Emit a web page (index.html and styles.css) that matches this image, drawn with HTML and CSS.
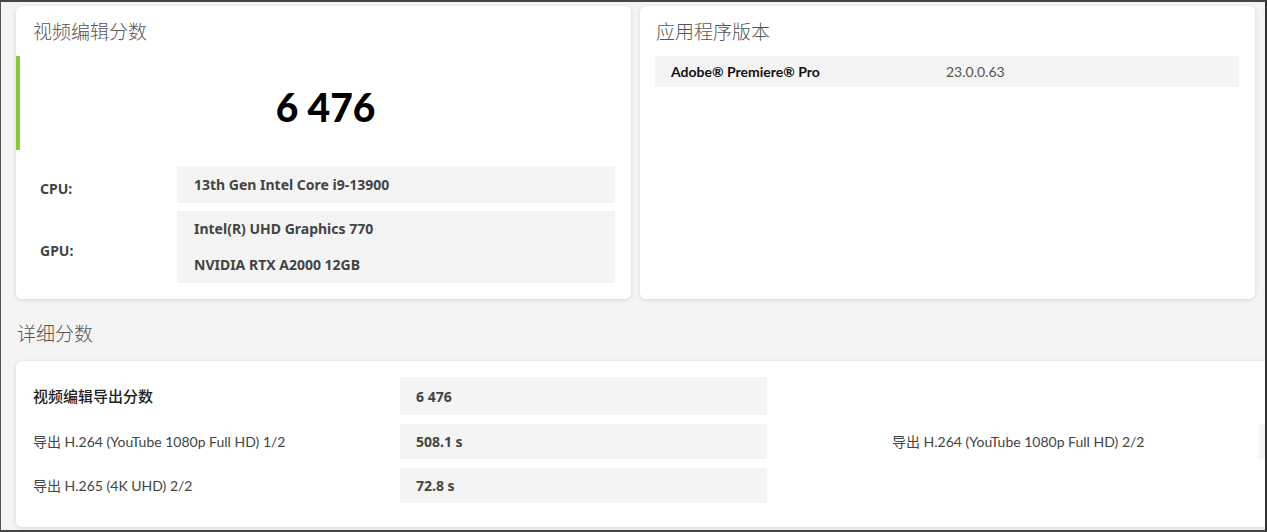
FILE: index.html
```html
<!DOCTYPE html>
<html lang="zh-CN">
<head>
<meta charset="utf-8">
<title>视频编辑分数</title>
<link rel="stylesheet" href="styles.css">
</head>
<body>
<div class="page">
  <div class="top-row">
    <section class="card score-card">
      <h2 class="card-title">视频编辑分数</h2>
      <div class="score-block"><span class="score">6 476</span></div>
      <div class="info">
        <div class="info-row">
          <div class="info-label">CPU:</div>
          <div class="info-value"><div class="info-line">13th Gen Intel Core i9-13900</div></div>
        </div>
        <div class="info-row">
          <div class="info-label">GPU:</div>
          <div class="info-value">
            <div class="info-line">Intel(R) UHD Graphics 770</div>
            <div class="info-line">NVIDIA RTX A2000 12GB</div>
          </div>
        </div>
      </div>
    </section>
    <section class="card app-card">
      <h2 class="card-title">应用程序版本</h2>
      <div class="app-row">
        <span class="app-name">Adobe® Premiere® Pro</span>
        <span class="app-version">23.0.0.63</span>
      </div>
    </section>
  </div>

  <h2 class="section-title">详细分数</h2>
  <section class="card detail-card">
    <div class="detail-grid">
      <div class="d-label d-main r1">视频编辑导出分数</div>
      <div class="d-value d-main r1">6 476</div>
      <div class="d-label r2">导出 H.264 (YouTube 1080p Full HD) 1/2</div>
      <div class="d-value r2">508.1 s</div>
      <div class="d-label r3">导出 H.265 (4K UHD) 2/2</div>
      <div class="d-value r3">72.8 s</div>
      <div class="d-label r2 c2">导出 H.264 (YouTube 1080p Full HD) 2/2</div>
      <div class="d-value r2 c2v"></div>
    </div>
  </section>
</div>
<div class="frame"></div>
</body>
</html>
```

FILE: styles.css
```css
html, body {
  margin: 0;
  padding: 0;
}
body {
  width: 1267px;
  height: 532px;
  overflow: hidden;
  background: #f4f4f4;
  font-family: "Noto Sans", "Noto Sans CJK SC", sans-serif;
  color: #333;
}
.page {
  padding: 6px 0 0 16px;
}
.top-row {
  display: flex;
  gap: 9px;
}
.card {
  background: #fff;
  border-radius: 6px;
  box-shadow: 0 1px 4px rgba(0, 0, 0, 0.13);
}
.score-card, .app-card {
  width: 615px;
  height: 293px;
  box-sizing: border-box;
}
.card-title {
  margin: 0;
  font-family: "Noto Sans CJK SC", sans-serif;
  font-weight: 300;
  font-size: 19px;
  line-height: 26px;
  color: #555;
  padding: 12px 0 12px 17px;
}
.app-card .card-title {
  padding-left: 16px;
}
.score-block {
  height: 94px;
  box-sizing: border-box;
  padding-top: 8px;
  border-left: 4px solid #8cc63f;
  display: flex;
  align-items: center;
  justify-content: center;
}
.score {
  font-family: "Lato", sans-serif;
  font-weight: 900;
  font-size: 39px;
  color: #000;
}
.info {
  padding: 16px 16px 0 24px;
  display: flex;
  flex-direction: column;
  gap: 8px;
}
.info-row {
  display: flex;
  align-items: center;
}
.info-label {
  width: 137px;
  font-size: 14px;
  font-weight: 700;
  color: #444;
  padding-top: 7px;
}
.info-value {
  flex: 1;
  background: #f4f4f4;
  padding: 0 17px;
  display: flex;
  flex-direction: column;
}
.info-line {
  height: 37px;
  line-height: 37px;
  font-size: 14px;
  font-weight: 700;
  color: #444;
}
.info-row + .info-row .info-line {
  height: 36px;
  line-height: 36px;
}
.app-row {
  margin: 0 16px 0 15px;
  height: 31px;
  background: #f4f4f4;
  display: flex;
  align-items: center;
  padding-left: 16px;
  font-family: "Lato", sans-serif;
  font-size: 14px;
}
.app-name {
  width: 275px;
  color: #111;
  font-weight: 700;
  font-family: "Lato", sans-serif;
}
.app-version {
  color: #555;
}
.section-title {
  margin: 0;
  font-family: "Noto Sans CJK SC", sans-serif;
  font-weight: 300;
  font-size: 19px;
  line-height: 26px;
  color: #555;
  padding: 21px 0 15px 1px;
}
.detail-card {
  width: 1251px;
  height: 166px;
  box-sizing: border-box;
  padding: 16px 0 0 17px;
  border-radius: 6px 0 0 6px;
  overflow: hidden;
}
.detail-grid {
  display: grid;
  grid-template-columns: 367px 367px 125px 367px 8px;
  grid-template-rows: 38px 35px 35px;
  row-gap: 9px;
}
.d-label {
  display: flex;
  align-items: center;
  padding-bottom: 1px;
  font-family: "Lato", "Noto Sans CJK SC", sans-serif;
  font-size: 14px;
  color: #444;
  grid-column: 1;
}
.d-value {
  display: flex;
  align-items: center;
  background: #f4f4f4;
  padding-left: 16px;
  font-size: 14px;
  font-weight: 700;
  color: #444;
  grid-column: 2;
}
.d-label.d-main {
  font-family: "Noto Sans CJK SC", sans-serif;
  font-weight: 500;
  font-size: 15px;
  color: #222;
  padding-bottom: 2px;
}
.r1 { grid-row: 1; }
.r2 { grid-row: 2; }
.r3 { grid-row: 3; }
.d-label.c2 { grid-column: 4; }
.d-value.c2v { grid-column: 5; padding: 0; }
.frame {
  position: fixed;
  inset: 0;
  pointer-events: none;
  border-top: 2px solid #444;
  border-left: 1px solid #555;
  border-right: 2px solid #333;
  border-bottom: 2px solid #444;
}
```
